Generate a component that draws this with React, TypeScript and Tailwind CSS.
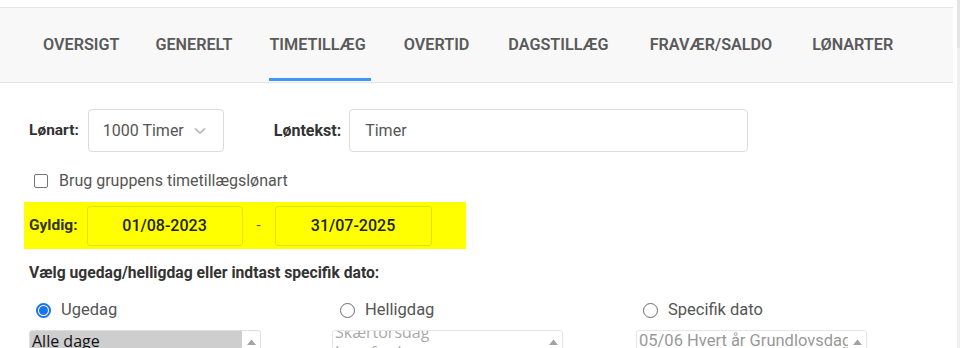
import React from "react";

const tabs: { t: string; ml: string }[] = [
  { t: "OVERSIGT", ml: "ml-0" },
  { t: "GENERELT", ml: "ml-[36px]" },
  { t: "TIMETILLÆG", ml: "ml-[37px]" },
  { t: "OVERTID", ml: "ml-[38px]" },
  { t: "DAGSTILLÆG", ml: "ml-[39px]" },
  { t: "FRAVÆR/SALDO", ml: "ml-[41px]" },
  { t: "LØNARTER", ml: "ml-[40px]" },
];

function UpArrow() {
  return (
    <svg width="9" height="6" viewBox="0 0 9 6" className="block">
      <path d="M0 6 L4.5 0.5 L9 6 Z" fill="#a3a3a3" />
    </svg>
  );
}

export default function App() {
  return (
    <div
      className="w-[963px] h-[348px] overflow-hidden bg-white flex"
      style={{ fontFamily: "Roboto, 'Liberation Sans', sans-serif" }}
    >
      <div className="w-[953px] shrink-0 flex flex-col">
        <div className="h-[7px] shrink-0" />
        <div className="h-[76px] shrink-0 bg-[#f8f8f8] border-t border-b border-[#e6e6e6] flex items-stretch pl-[43px]">
          {tabs.map(({ t, ml }) => (
            <div key={t} className={`relative flex items-center ${ml}`}>
              <span className="text-[16.2px] font-semibold text-[#5a5a5a]">{t}</span>
              {t === "TIMETILLÆG" && (
                <div className="absolute left-0 right-[-5px] bottom-[1px] h-[3px] bg-[#4196f0]" />
              )}
            </div>
          ))}
        </div>

        <div className="pl-[29px] pt-[26px] shrink-0">
          <div className="flex items-center h-[43px]">
            <span className="text-[15.5px] font-bold text-[#333]">Lønart:</span>
            <div className="ml-[9px] w-[136px] h-[43px] border border-[#dcdcdc] rounded-[4px] flex items-center pl-[14px]">
              <span className="text-[16px] text-[#555]">1000 Timer</span>
              <svg width="12" height="8" viewBox="0 0 12 8" className="ml-[10px]">
                <path d="M1 1.5 L6 6 L11 1.5" fill="none" stroke="#b0b0b0" strokeWidth="1.6" />
              </svg>
            </div>
            <span className="ml-[50px] text-[16px] font-bold text-[#333]">Løntekst:</span>
            <div className="ml-[8px] w-[399px] h-[43px] border border-[#dcdcdc] rounded-[4px] flex items-center pl-[15px]">
              <span className="text-[16px] text-[#555]">Timer</span>
            </div>
          </div>

          <div className="flex items-center mt-[18px] h-[22px] pl-[5px]">
            <div className="w-[14px] h-[14px] border border-[#767676] rounded-[2px] bg-white" />
            <span className="ml-[11px] text-[16px] text-[#555]">Brug gruppens timetillægslønart</span>
          </div>

          <div className="mt-[10px] -ml-[5px] w-[442px] h-[47px] bg-[#ffff00] flex items-center pl-[5px]">
            <span className="text-[15.5px] font-bold text-[#333]">Gyldig:</span>
            <div className="ml-[9px] w-[156px] h-[40px] border border-[#e2e20a] rounded-[3px] flex items-center justify-center">
              <span className="text-[16px] font-medium text-[#222]">01/08-2023</span>
            </div>
            <span className="w-[32px] text-center text-[15px] text-[#555]">-</span>
            <div className="w-[157px] h-[40px] border border-[#e2e20a] rounded-[3px] flex items-center justify-center">
              <span className="text-[16px] font-medium text-[#222]">31/07-2025</span>
            </div>
          </div>

          <div className="mt-[14px] text-[15.7px] font-bold text-[#333] h-[20px] leading-[20px]">
            Vælg ugedag/helligdag eller indtast specifik dato:
          </div>

          <div className="flex mt-[15px] h-[24px] items-center">
            <div className="w-[303px] flex items-center pl-[7px]">
              <div className="w-[15px] h-[15px] rounded-full border-[2px] border-[#1a73e8] flex items-center justify-center">
                <div className="w-[9px] h-[9px] rounded-full bg-[#1a73e8]" />
              </div>
              <span className="ml-[10px] text-[16.5px] text-[#555]">Ugedag</span>
            </div>
            <div className="w-[304px] flex items-center pl-[8px]">
              <div className="w-[15px] h-[15px] rounded-full border border-[#6b6b6b]" />
              <span className="ml-[10px] text-[16.5px] text-[#555]">Helligdag</span>
            </div>
            <div className="flex items-center pl-[7px]">
              <div className="w-[15px] h-[15px] rounded-full border border-[#6b6b6b]" />
              <span className="ml-[10px] text-[16.5px] text-[#555]">Specifik dato</span>
            </div>
          </div>

          <div className="flex mt-[8px]">
            <div className="w-[232px] h-[40px] border border-[#dedede] rounded-[3px] flex overflow-hidden">
              <div className="flex-1">
                <div className="bg-[#cecece] h-[20px] pl-[2px] text-[16px] leading-[20px] text-[#111]" style={{ fontFamily: "'Open Sans', 'Noto Sans', sans-serif" }}>
                  Alle dage
                </div>
              </div>
              <div className="w-[18px] flex justify-center pt-[8px]">
                <UpArrow />
              </div>
            </div>
            <div className="ml-[71px] w-[231px] h-[40px] border border-[#e6e6e6] rounded-[3px] flex overflow-hidden">
              <div className="flex-1 overflow-hidden">
                <div className="-mt-[9px] pl-[2px] text-[16px] leading-[20px] text-[#aaa]" style={{ fontFamily: "'Open Sans', 'Noto Sans', sans-serif" }}>
                  Skærtorsdag
                  <br />
                  Langfredag
                </div>
              </div>
              <div className="w-[18px] flex justify-center pt-[8px]">
                <UpArrow />
              </div>
            </div>
            <div className="ml-[73px] w-[231px] h-[40px] border border-[#e6e6e6] rounded-[3px] flex overflow-hidden">
              <div className="flex-1 overflow-hidden whitespace-nowrap">
                <div className="pl-[2px] text-[16.5px] leading-[20px] text-[#999]">
                  05/06 Hvert år Grundlovsdag
                </div>
              </div>
              <div className="w-[18px] flex justify-center pt-[8px] bg-white">
                <UpArrow />
              </div>
            </div>
          </div>
        </div>
      </div>
      <div className="w-[4px] shrink-0" />
      <div className="w-[3px] shrink-0 flex flex-col">
        <div className="h-[48px] bg-[#e4e4e4]" />
        <div className="flex-1 bg-[#efefef]" />
      </div>
    </div>
  );
}
